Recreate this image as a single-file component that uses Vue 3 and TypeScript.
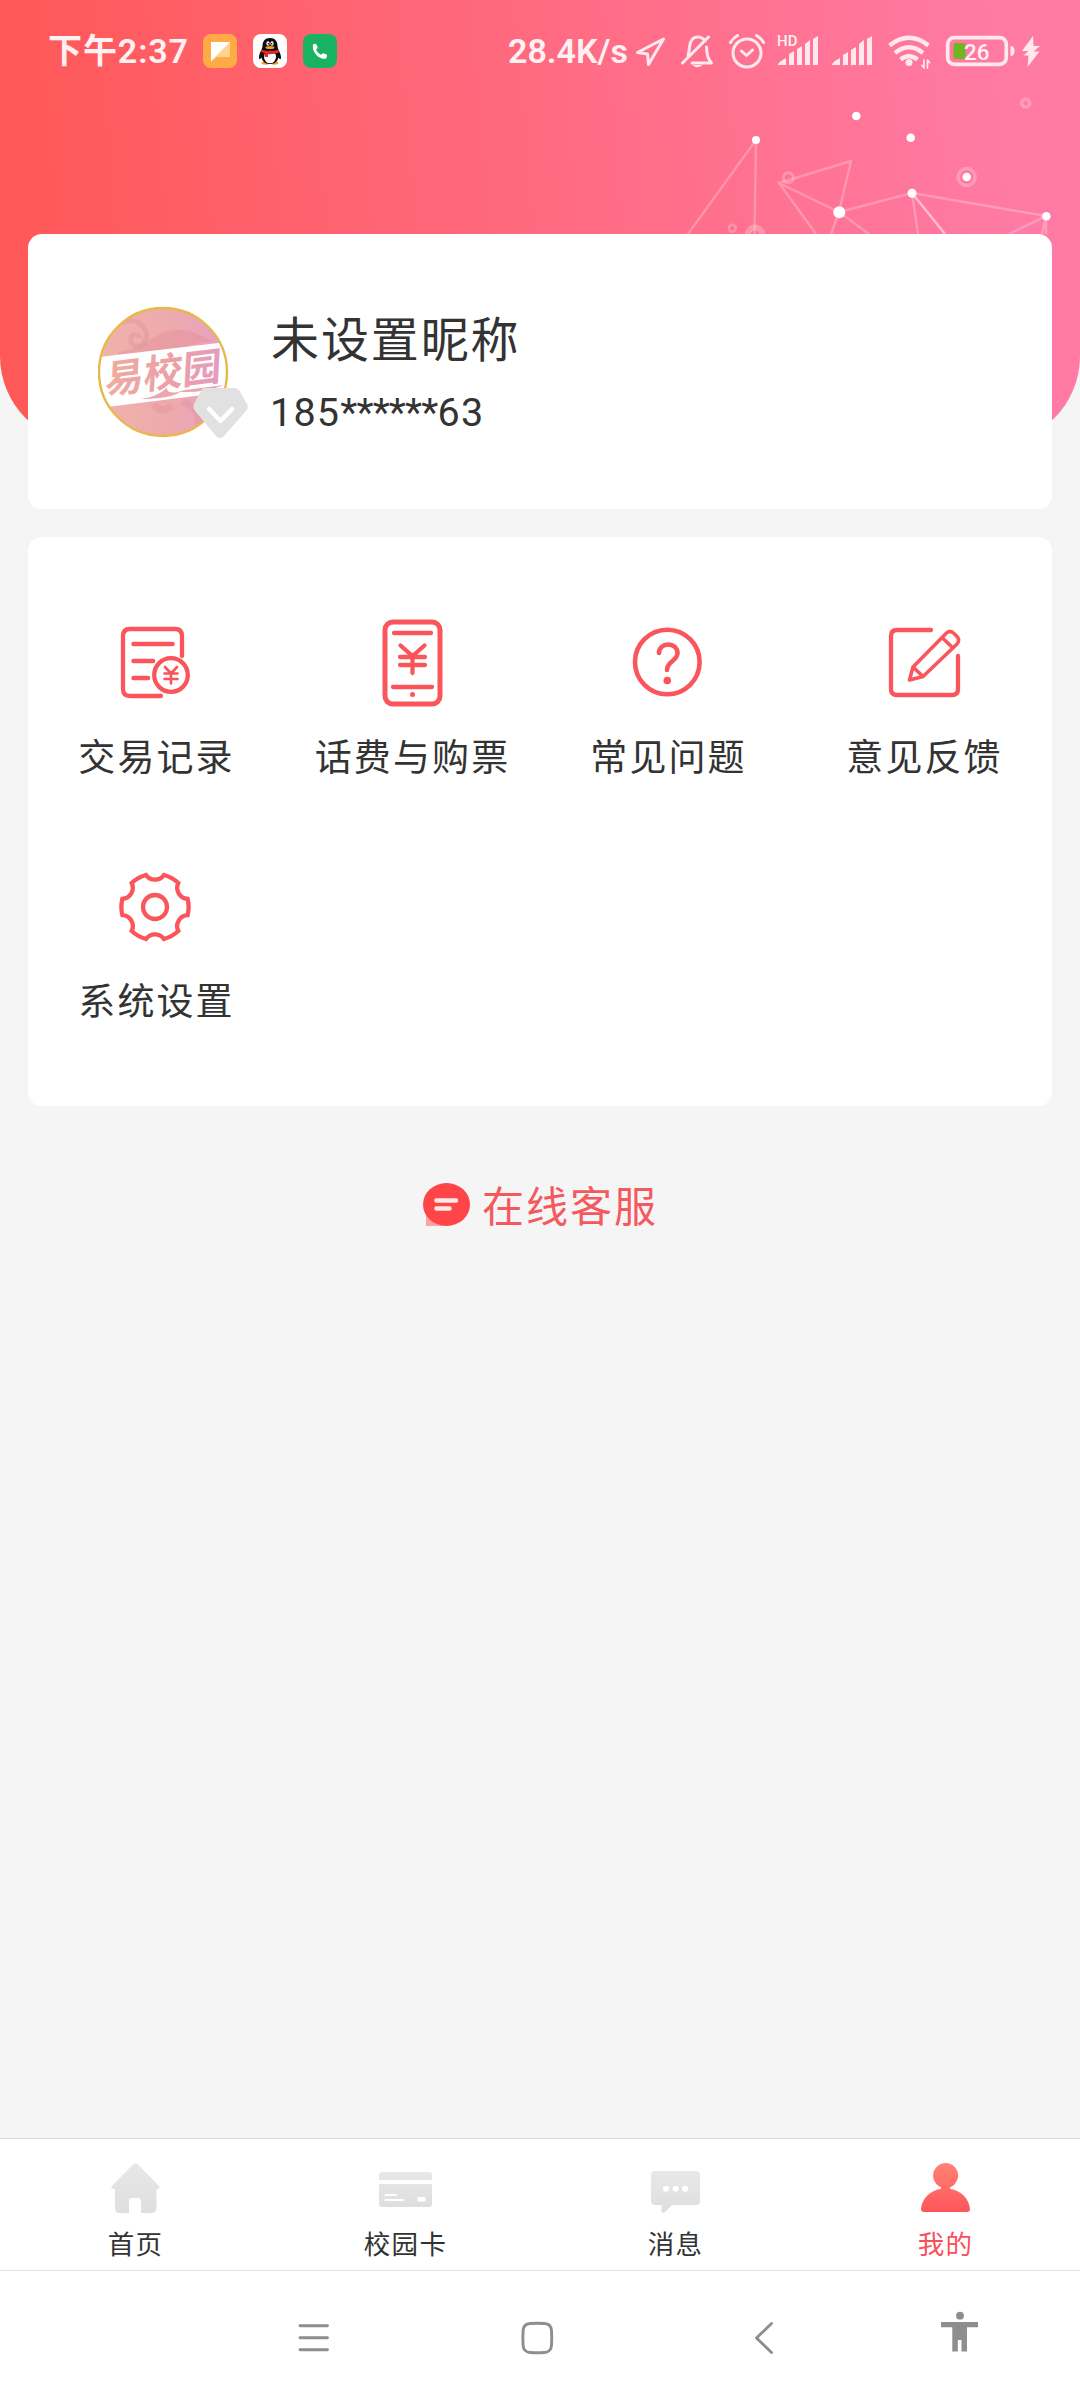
<script setup lang="ts">
type MenuIcon = 'record' | 'phone' | 'help' | 'feedback' | 'gear'
type TabIcon = 'home' | 'card' | 'message' | 'mine'

const menu: { icon: MenuIcon; label: string }[] = [
  { icon: 'record', label: '交易记录' },
  { icon: 'phone', label: '话费与购票' },
  { icon: 'help', label: '常见问题' },
  { icon: 'feedback', label: '意见反馈' },
  { icon: 'gear', label: '系统设置' },
]

const tabs: { icon: TabIcon; label: string; active?: boolean }[] = [
  { icon: 'home', label: '首页' },
  { icon: 'card', label: '校园卡' },
  { icon: 'message', label: '消息' },
  { icon: 'mine', label: '我的', active: true },
]
</script>

<template>
  <div class="screen">
    <div class="banner">
      <svg class="network" viewBox="660 80 420 160" width="420" height="160" fill="none">
        <g stroke="#fff" stroke-opacity=".25" stroke-width="2.400">
          <path d="M688 234 756 140 754.500 234M816 234 779 183 851 161 839 212 779 183M831 234 839 212 869 234M839 212 912 193 918 234M912 193 1046 216 1009 234M1046 216 1042 234M1046 216 1046 234" />
          <circle cx="1025.700" cy="103" r="4" stroke-width="3.500" />
          <circle cx="788.300" cy="177.700" r="5" stroke-width="3" />
          <circle cx="732.300" cy="228.300" r="3.500" />
          <circle cx="755" cy="235" r="7.500" stroke-width="6" />
          <circle cx="966.700" cy="177" r="8.500" stroke-width="3.500" />
        </g>
        <path d="M912 193 945 234" stroke="#fff" stroke-opacity=".5" stroke-width="2.500" />
        <g fill="#fff">
          <circle cx="756" cy="140" r="4" />
          <circle cx="856.300" cy="116" r="4.300" />
          <circle cx="910.700" cy="137.700" r="4.300" />
          <circle cx="966.700" cy="177" r="4.300" />
          <circle cx="912" cy="193.300" r="4.500" />
          <circle cx="839.300" cy="212.300" r="6" />
          <circle cx="1046.300" cy="216.300" r="4.300" />
        </g>
      </svg>
    </div>

    <header class="status">
      <span class="clock"><span class="ampm">下午</span>2:37</span>
      <svg class="app" viewBox="0 0 34 34">
        <rect width="34" height="34" rx="8" fill="#ffab45" />
        <path d="M9 8h18v15H14l-6 5z" fill="#ffd390" />
        <path d="M8 8h19L8 27z" fill="#fff" />
      </svg>
      <svg class="app" viewBox="0 0 34 34">
        <rect width="34" height="34" rx="8" fill="#fff" />
        <ellipse cx="12.500" cy="29" rx="4" ry="1.700" fill="#f79a2b" />
        <ellipse cx="21.500" cy="29" rx="4" ry="1.700" fill="#f79a2b" />
        <path d="M17 4c-5 0-7.500 3.500-7.500 8 0 3-3.500 7.500-3.500 11 0 3 1 2.500 2.500.5C9.500 28 13 30 17 30s7.500-2 8.500-6.500c1.500 2 2.500 2.500 2.500-.5 0-3.500-3.500-8-3.500-11 0-4.500-2.500-8-7.500-8z" fill="#0b0b0b" />
        <ellipse cx="17" cy="23" rx="6" ry="6.300" fill="#fff" />
        <ellipse cx="15" cy="9.500" rx="1.600" ry="2.200" fill="#fff" />
        <ellipse cx="19" cy="9.500" rx="1.600" ry="2.200" fill="#fff" />
        <circle cx="15.400" cy="9.800" r=".8" />
        <circle cx="18.700" cy="9.800" r=".8" />
        <ellipse cx="17" cy="13.500" rx="4.500" ry="1.500" fill="#f9a01b" />
        <path d="M8.500 15.500q8.500 3 17 0l.5 3q-4.500 2-11 1.700V23l-3.500-.3V19q-2-.5-3.500-1z" fill="#e3262b" />
      </svg>
      <svg class="app" viewBox="0 0 34 34">
        <rect width="34" height="34" rx="8" fill="#19b263" />
        <path d="M10 10.500c1.500-1.300 3-1 3.600.3l1 2.500c.3 1-1 1.600-1.500 2.400 1 2.300 2.700 4 5 5 .8-.5 1.400-1.800 2.400-1.500l3.300 1.300c.5 1.300 0 3.500-1 4.200C16 26 8.500 18 10 10.500z" fill="#fff" />
      </svg>

      <span class="speed">28.4K/s</span>
      <svg class="sys arrow" viewBox="635 34 32 34" width="32" height="34">
        <path d="M663.500 39 648.500 64.500 647.500 54 637.500 52.500z" />
      </svg>
      <svg class="sys bell" viewBox="680 33 36 36" width="36" height="36">
        <path d="M688 56c1-3 1-6 1.500-9 .8-7.500 4.500-10 8-10 4 0 6 1.500 7.500 4M706.500 47c.5 7 .5 11 5 16H692M682.500 63 708.500 37" />
        <path d="M692.500 65h10q-5 4.500-10 0z" class="solid" />
      </svg>
      <svg class="sys alarm" viewBox="728 33 38 36" width="38" height="36">
        <circle cx="747" cy="53" r="14" />
        <path d="M741.500 51 746.500 55.500 752.500 50M730.500 42.500q2.500-4.500 7-7M763.500 42.500q-2.500-4.500-7-7" />
      </svg>
      <svg class="sys hd" viewBox="777 33 42 34" width="42" height="34">
        <text x="777" y="46" class="hd-label">HD</text>
        <path class="solid" d="M778 65q0-3 8-7v7zM789 54l5-3v14h-5zM797 49l5-3v19h-5zM805 44l5-4v25h-5zM813 39l5-3v29h-5z" />
      </svg>
      <svg class="sys signal" viewBox="832 33 42 34" width="42" height="34">
        <path class="solid" d="M832 65q0-3 8-7v7zM843 55l5-3v13h-5zM851 50l5-3v18h-5zM859 44l5-4v25h-5zM867 39l5-3v29h-5z" />
      </svg>
      <svg class="sys wifi" viewBox="887 33 46 38" width="46" height="38">
        <g stroke-width="4.300" stroke-linecap="butt">
          <path d="M889.500 45.500q19.500-15.500 39 0M895 53q14-11.500 28 0M900.500 59.500q8.500-6.500 17 0" />
        </g>
        <circle class="solid" cx="909" cy="62.500" r="3.500" />
        <path d="M924 60v8l-2-2.500M927.500 68v-8l2 2.500" stroke-width="1.700" />
      </svg>
      <svg class="sys battery" viewBox="945 34 72 34" width="72" height="34">
        <rect x="947.700" y="37.700" width="58.600" height="26.600" rx="6.500" stroke-width="3.700" />
        <rect x="953.500" y="43" width="12" height="16" rx="2" fill="#6fb620" stroke="none" />
        <path d="M1010.500 46q4 0 4 5t-4 5z" class="solid" />
        <text x="964" y="59.500" class="battery-label">26</text>
      </svg>
      <svg class="sys bolt" viewBox="1020 34 22 35" width="22" height="35">
        <path class="solid" d="M1033 36 1022 51h6.500l-5 4.500h5l-1 11.500 12-15.500h-6l6.500-5.500h-6.500z" />
      </svg>
    </header>

    <main>
      <section class="profile">
        <div class="avatar">
          <svg viewBox="0 0 150 134" width="150" height="134">
            <defs>
              <linearGradient id="face" x1="0" y1="0" x2="1" y2="0">
                <stop offset="0" stop-color="#f0b3a9" />
                <stop offset=".6" stop-color="#eda9ae" />
                <stop offset="1" stop-color="#e8a0c4" />
              </linearGradient>
              <linearGradient id="ink" x1="0" y1="0" x2="1" y2="0">
                <stop offset="0" stop-color="#f0ab9e" />
                <stop offset=".6" stop-color="#eba0a6" />
                <stop offset="1" stop-color="#e49cc0" />
              </linearGradient>
              <clipPath id="round"><circle cx="65" cy="66" r="64" /></clipPath>
            </defs>
            <g clip-path="url(#round)">
              <rect width="130" height="134" fill="url(#face)" />
              <path d="M20 46C36 44 48 36 62 28c18-8 34-4 52 8-22 0-30 8-48 11s-30 3-46 5z" fill="#e28c95" opacity=".4" />
              <path d="M24 16c18-6 30 10 22 21-6 6-15 3-13-5 2-5 8-4 8 0" fill="none" stroke="#dd8d8f" stroke-width="5" opacity=".35" />
              <path d="M84 96q20 4 16 30M56 98q6 10 18 2" fill="none" stroke="#e28c95" stroke-width="7" opacity=".35" />
              <path d="M0 51 130 36v50L0 102z" fill="#fff" />
              <text x="7" y="88" class="logo" fill="url(#ink)" transform="rotate(-7 7 88) skewX(-10) translate(15 0)">易校园</text>
              <path d="M42 93q15-1 27-11 0 8 18 2l39-5q-20 8-44 7-10 7-40 7z" fill="#eba5ae" />
            </g>
            <circle cx="65" cy="66" r="64" fill="none" stroke="#e5b94c" stroke-width="2.400" />
            <path d="M106 82h30q3 0 5 2l8 14q2 4-1 7l-22 25q-4 4-8 0L98 106q-4-4-2-8l7-13q1-3 3-3z" fill="#e1e1e1" />
            <path d="M111 103 122.500 115 134 103" fill="none" stroke="#fff" stroke-width="4.500" stroke-linecap="round" stroke-linejoin="round" />
          </svg>
        </div>
        <div class="who">
          <div class="name">未设置昵称</div>
          <div class="mobile">185<span class="mask">******</span>63</div>
        </div>
      </section>

      <section class="menu">
        <div v-for="item in menu" :key="item.icon" class="entry">
          <svg viewBox="-45 -45 90 90" width="90" height="90" class="line-icon">
            <template v-if="item.icon === 'record'">
              <path d="M26-6V-26q0-7-7-7H-26q-7 0-7 7v53q0 7 7 7H5" />
              <path d="M-22.500-18H16.500M-22.500-1H-3M-22.500 16h14.500" stroke-width="4.500" />
              <circle cx="15" cy="13" r="16.800" />
              <path d="M9 5 15 11.500 21 5M8.500 11.500h13M8.500 17h13M15 11.500v10" stroke-width="2.600" />
            </template>
            <template v-else-if="item.icon === 'phone'">
              <rect x="-27" y="-40" width="55" height="82" rx="8" stroke-width="5" />
              <path d="M-18-29H19M-19 25H20M-11.500-16.500 .500-6 12.500-16.500M-12-5h25M-12 3h25M.5-6v17" />
              <circle cx=".5" cy="32.500" r="2.500" fill="#f9555a" stroke="none" />
            </template>
            <template v-else-if="item.icon === 'help'">
              <circle cx="-.7" cy="0" r="32.300" stroke-width="4.600" />
              <path d="M-9-9c0-5 4-8.500 9-8.500 5.500 0 9.500 3.500 9.500 8.500C9.500-1-1-1-1 8" stroke-width="4.600" />
              <circle cx="-.7" cy="18.500" r="3.800" fill="#f9555a" stroke="none" />
            </template>
            <template v-else-if="item.icon === 'feedback'">
              <path d="M7-32H-27q-6 0-6 6v53q0 6 6 6h55q6 0 6-6V-6" />
              <path d="M-14.500 18-11 5 22-28.500q4-4 8 0l3 3q3.500 4-.5 8L-1 14.500zM-11 5l10 9.500M18-24.500 29-14" stroke-width="3.600" stroke-linejoin="round" />
            </template>
            <template v-else>
              <path d="M9-32A34 34 0 0 1 23.300-24A11 11 0 0 0 32.600-8.200A34 34 0 0 1 32.600 8.200A11 11 0 0 0 23.300 24A34 34 0 0 1 9 32A11 11 0 0 0-9 32A34 34 0 0 1-23.300 24A11 11 0 0 0-32.600 8.200A34 34 0 0 1-32.600-8.200A11 11 0 0 0-23.300-24A34 34 0 0 1-9-32A11 11 0 0 0 9-32Z" transform="translate(-1 1)" />
              <circle cx="-1" cy="1" r="12" />
            </template>
          </svg>
          <span>{{ item.label }}</span>
        </div>
      </section>

      <div class="support">
        <svg viewBox="0 0 48 44" width="48" height="44">
          <path d="M3 26h18v17H3z" fill="#fba3a6" />
          <ellipse cx="23.500" cy="21.500" rx="23.500" ry="21.500" fill="#ff4547" />
          <path d="M13.500 17.500H33M13.500 25.500H26.500" stroke="#ffe9e9" stroke-width="4.500" stroke-linecap="round" />
        </svg>
        <span>在线客服</span>
      </div>
    </main>

    <nav class="tabs">
      <div v-for="tab in tabs" :key="tab.icon" class="tab" :class="{ active: tab.active }">
        <svg viewBox="-30 -30 60 60" width="60" height="60" fill="url(#grey)">
          <defs>
            <linearGradient id="grey" x1="0" y1="0" x2="0" y2="1">
              <stop offset="0" stop-color="#e8e8e8" />
              <stop offset="1" stop-color="#dedede" />
            </linearGradient>
            <linearGradient id="warm" gradientUnits="userSpaceOnUse" x1="0" y1="-25" x2="0" y2="24">
              <stop offset="0" stop-color="#ff8273" />
              <stop offset="1" stop-color="#ff565b" />
            </linearGradient>
          </defs>
          <path v-if="tab.icon === 'home'" d="M-2-23.500q2.500-2 5 0L24-2q1.500 3-2 3h-.5V20q0 5-5 5H6V13q0-3-3-3H-3q-3 0-3 3v12h-9q-5 0-5-5V1h-1q-4 0-2-3z" />
          <template v-else-if="tab.icon === 'card'">
            <path d="M-23-16H24q3 0 3 3v5H-26v-5q0-3 3-3zM-26-4H27V16q0 3-3 3H-23q-3 0-3-3z" />
            <path d="M-19.500 7H-9M-19.500 12H-2" stroke="#fff" stroke-width="2" stroke-linecap="round" />
            <rect x="12.500" y="9" width="8" height="4.500" rx="1" fill="#fff" />
          </template>
          <template v-else-if="tab.icon === 'message'">
            <path d="M-20-17H21q4 0 4 4V13q0 4-4 4H-3l-7.500 7.500q-3 1-3-1V17H-20q-4 0-4-4V-13q0-4 4-4z" />
            <g fill="#fff"><circle cx="-9" cy=".7" r="3" /><circle cx=".7" cy=".7" r="3" /><circle cx="10" cy=".7" r="3" /></g>
          </template>
          <g v-else fill="url(#warm)">
            <circle cx=".6" cy="-12.400" r="12.500" />
            <path d="M-4-2V.8C-16 3-23 11-24 21q0 3 3 3H22q3 0 3-3C24 11 17 3 5 .8V-2z" />
          </g>
        </svg>
        <span>{{ tab.label }}</span>
      </div>
    </nav>

    <footer class="keys">
      <svg class="k-menu" viewBox="298 2318 32 40" width="32" height="40">
        <path d="M300 2325.700h27.500M300 2337.700h27.500M300 2349.700h27.500" />
      </svg>
      <svg class="k-home" viewBox="519 2318 36 40" width="36" height="40">
        <path d="M530 2323.500q7.300-.6 14.600 0 6.400.4 6.900 7 .5 7.500 0 15-.5 6.500-6.900 7-7.300.6-14.600 0-6.400-.5-6.900-7-.5-7.500 0-15 .5-6.600 6.900-7z" />
      </svg>
      <svg class="k-back" viewBox="752 2318 24 40" width="24" height="40">
        <path d="M771.500 2323.500 756.500 2338l15 14.500" />
      </svg>
      <svg class="k-access" viewBox="940 2310 40 48" width="40" height="48">
        <circle cx="960" cy="2315.700" r="3.900" fill="#8e8e8e" stroke="none" />
        <path d="M941 2322h37v5.300h-11v24.200h-5.500v-11.500h-3.700v11.500h-5.500v-24.200h-11.300z" fill="#8e8e8e" stroke="none" />
      </svg>
    </footer>
  </div>
</template>

<style>
body {
  margin: 0;
}
</style>

<style scoped>
.screen {
  position: relative;
  display: flex;
  flex-direction: column;
  width: 1080px;
  height: 2400px;
  overflow: hidden;
  background: #f5f5f5;
  color: #333;
  font-family: Roboto, 'Noto Sans CJK SC', sans-serif;
}
svg {
  display: block;
  flex: none;
}
.banner {
  position: absolute;
  top: 0;
  left: 0;
  width: 1080px;
  height: 444px;
  border-radius: 0 0 88px 88px;
  background: linear-gradient(85deg, #ff5858 3%, #ff6a80 50%, #ff7ba6 95%);
}
.network {
  position: absolute;
  left: 660px;
  top: 80px;
}
.status {
  position: relative;
  display: flex;
  align-items: flex-start;
  height: 102px;
  color: #fff1f2;
}
.clock {
  width: 155px;
  margin-left: 48px;
  line-height: 40px;
  margin-top: 31px;
  font-size: 34px;
  font-weight: 600;
  letter-spacing: 0.9px;
  white-space: nowrap;
}
.ampm {
  font-weight: 700;
}
.app {
  width: 34px;
  height: 34px;
  margin: 34px 16px 0 0;
}
.speed {
  width: 122px;
  margin: 31px 0 0 155px;
  line-height: 40px;
  font-size: 34px;
  font-weight: 600;
  white-space: nowrap;
}
.sys {
  fill: none;
  stroke: #ffe9ee;
  stroke-width: 3;
  stroke-linejoin: round;
  stroke-linecap: round;
}
.sys .solid {
  fill: #ffe9ee;
  stroke: none;
}
.sys text {
  fill: #fff1f2;
  stroke: none;
  font-weight: 500;
}
.arrow { margin: 34px 0 0 5px; }
.bell { margin: 33px 0 0 13px; }
.alarm { margin: 33px 0 0 12px; }
.hd { margin: 33px 0 0 11px; }
.signal { margin: 33px 0 0 13px; }
.wifi { margin: 33px 0 0 13px; }
.battery { margin: 34px 0 0 12px; }
.bolt { margin: 34px 0 0 3px; }
.hd-label {
  font-size: 15px;
}
.battery-label {
  font-size: 22.500px;
}
main {
  position: relative;
  flex: 1;
  padding: 132px 28px 0;
}
.profile {
  display: flex;
  box-sizing: border-box;
  height: 275px;
  padding: 72px 70px 0;
  border-radius: 14px;
  background: #fff;
}
.avatar {
  width: 173px;
}
.name {
  margin-top: -1px;
  font-size: 48px;
  line-height: 72px;
  letter-spacing: 1.900px;
}
.mobile {
  margin: 10px 0 0 -1px;
  font-size: 39.500px;
  line-height: 52px;
  letter-spacing: 1.200px;
}
.mask {
  letter-spacing: -0.8px;
}
.menu {
  display: grid;
  grid-template-columns: repeat(4, 256px);
  grid-auto-rows: 244px;
  box-sizing: border-box;
  height: 569px;
  margin-top: 28px;
  padding-top: 80px;
  border-radius: 14px;
  background: #fff;
}
.entry {
  display: flex;
  flex-direction: column;
  align-items: center;
}
.entry span {
  margin-top: 24px;
  padding-left: 1px;
  font-size: 37px;
  line-height: 56px;
  letter-spacing: 2.100px;
}
.line-icon {
  fill: none;
  stroke: #f9555a;
  stroke-width: 4.300;
  stroke-linecap: round;
}
.support {
  display: flex;
  align-items: flex-start;
  margin: 67px 0 0 395px;
  color: #f4595e;
}
.support svg {
  margin-top: 10px;
}
.support span {
  margin: 3px 0 0 11px;
  font-size: 42px;
  line-height: 64px;
  letter-spacing: 2px;
}
.logo {
  font-size: 39px;
  font-weight: 700;
}
.tabs {
  position: relative;
  display: flex;
  box-sizing: border-box;
  height: 133px;
  border-top: 1px solid #dcdcdc;
  border-bottom: 1px solid #e3e3e3;
  background: #fff;
}
.tab {
  display: flex;
  flex: 1;
  flex-direction: column;
  align-items: center;
  padding-top: 19px;
}
.tab span {
  margin-top: 7px;
  padding-left: 1px;
  font-size: 26.500px;
  line-height: 40px;
  letter-spacing: 1.300px;
}
.tab.active {
  color: #f9505a;
}
.keys {
  position: relative;
  display: flex;
  height: 129px;
  background: #fff;
}
.keys svg {
  fill: none;
  stroke: #8e8e8e;
  stroke-width: 2.900;
  stroke-linecap: round;
  stroke-linejoin: round;
}
.k-menu { margin: 47px 0 0 298px; }
.k-home { margin: 47px 0 0 189px; }
.k-back { margin: 47px 0 0 197px; }
.k-access { margin: 39px 0 0 164px; }
</style>
